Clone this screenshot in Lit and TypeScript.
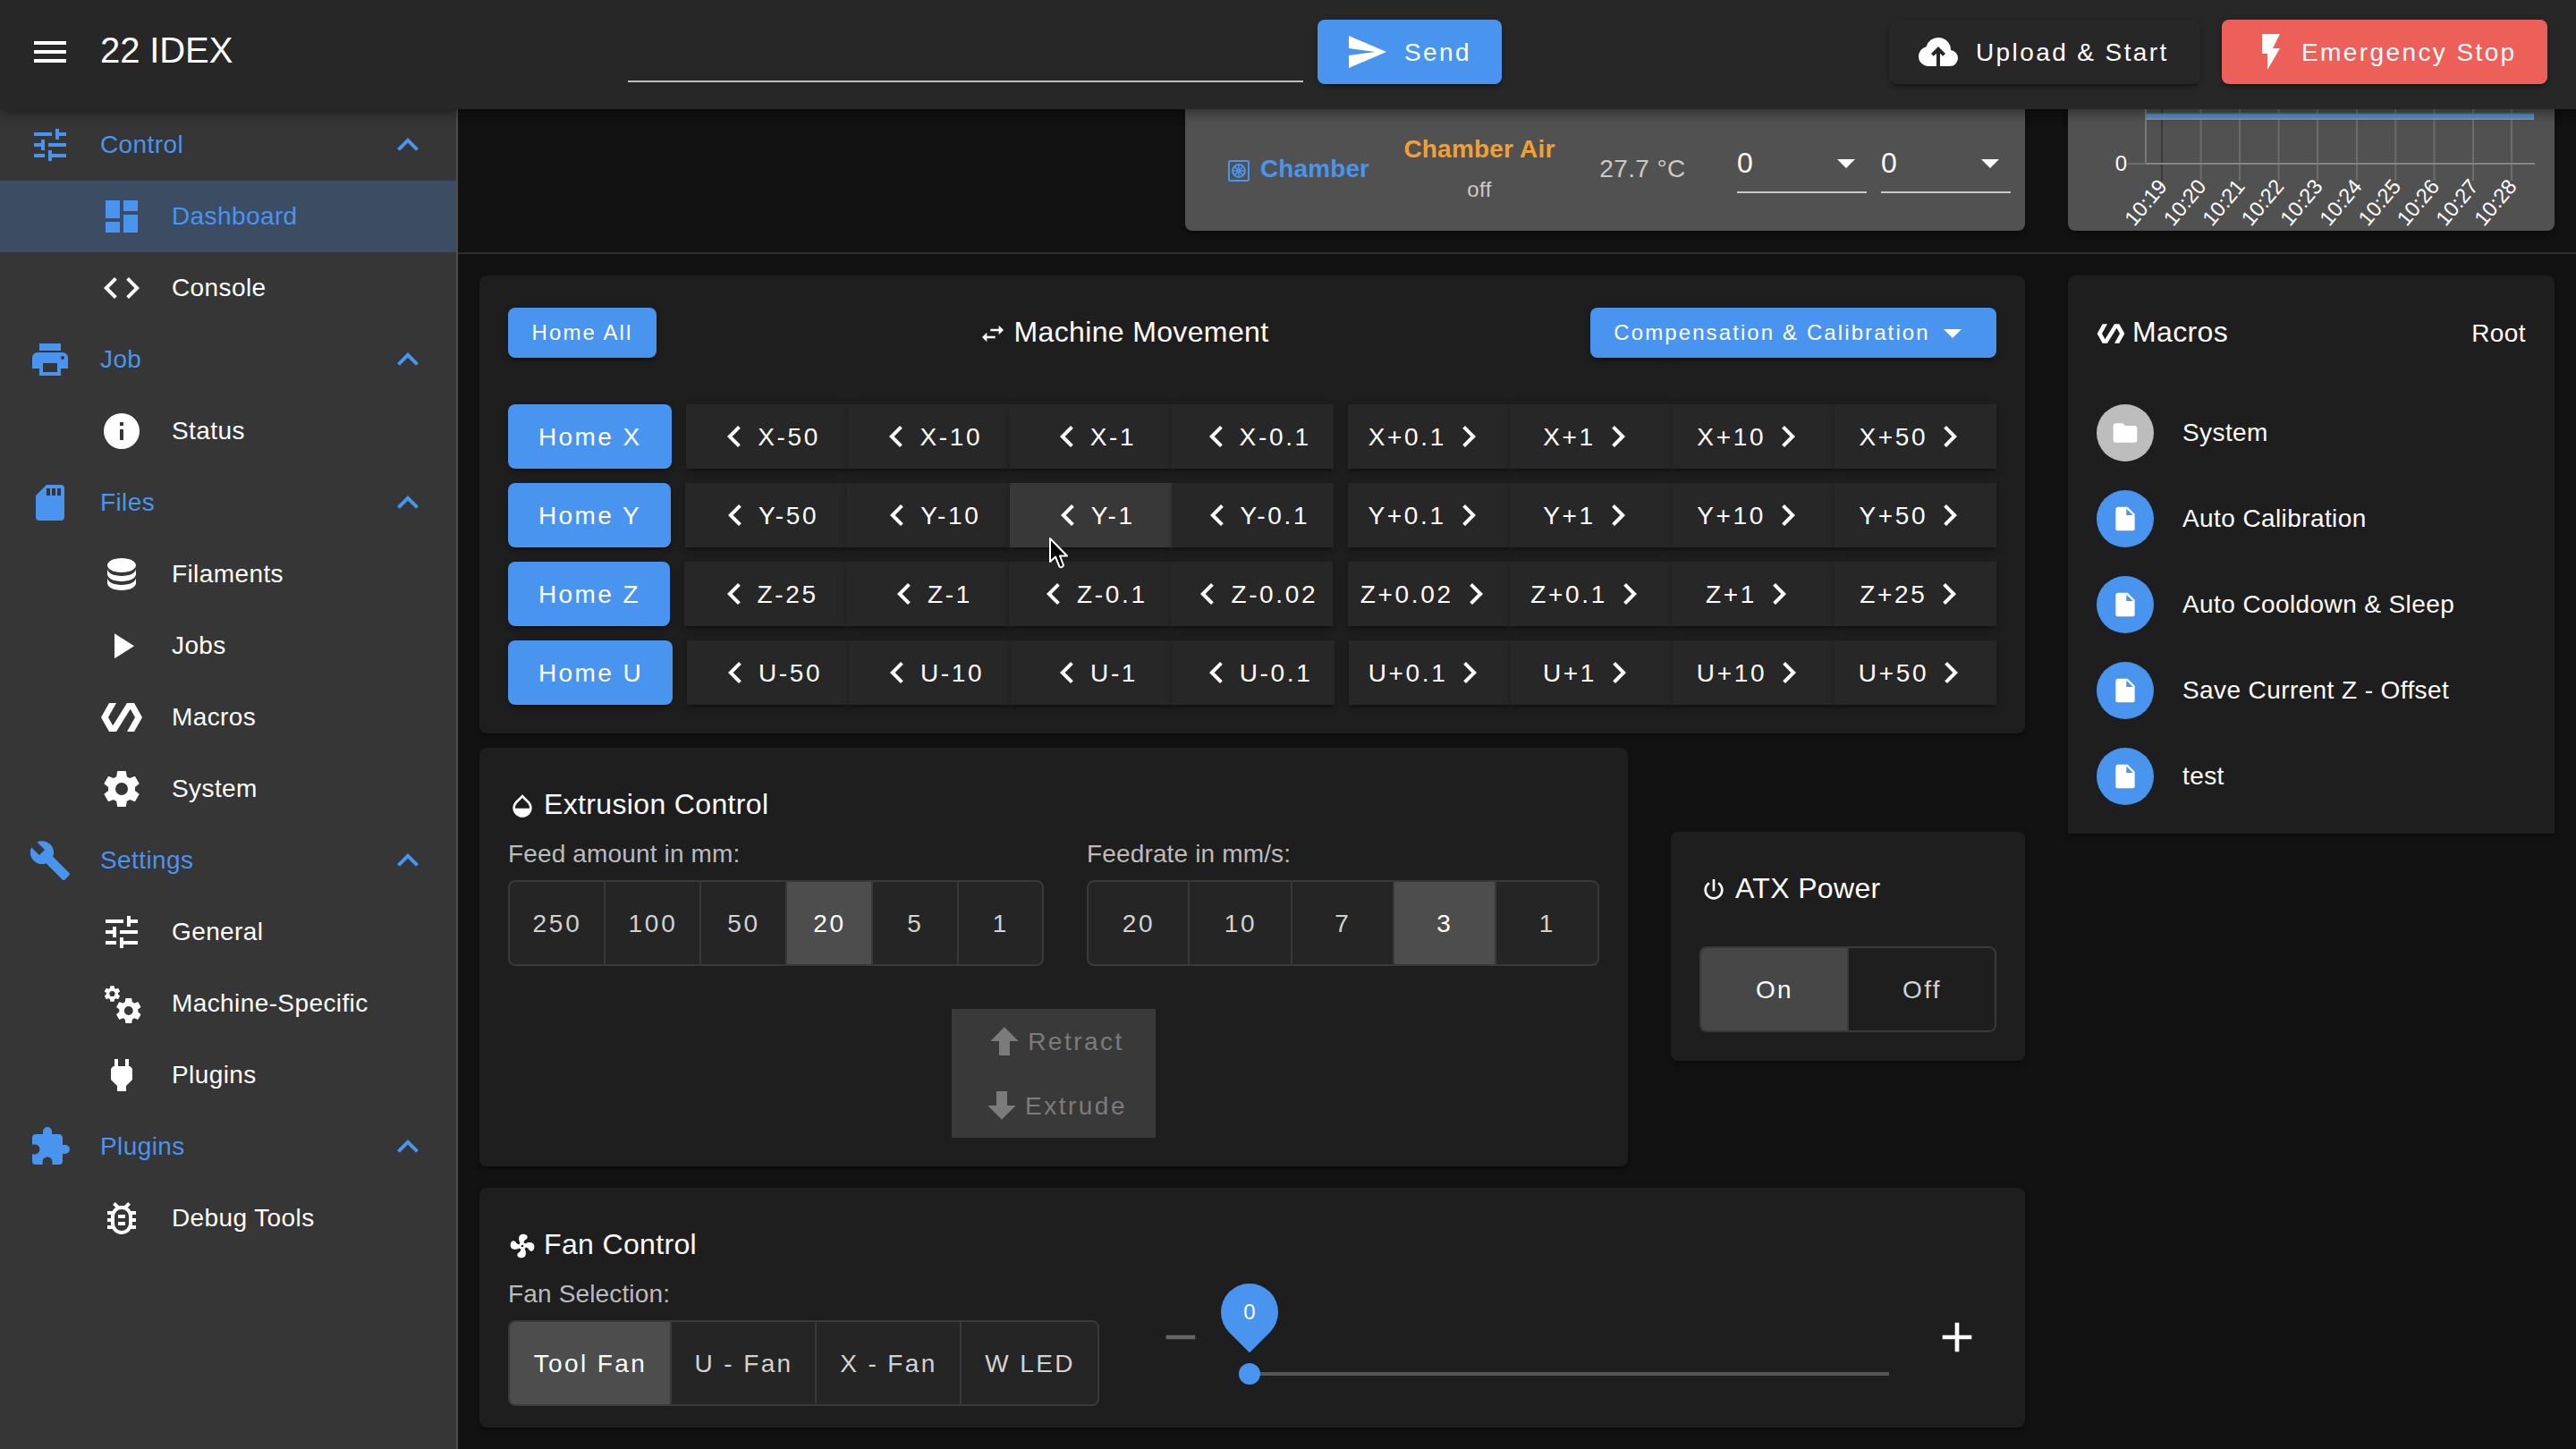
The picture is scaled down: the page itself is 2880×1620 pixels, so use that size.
import { LitElement, html, svg, css } from 'lit';
import { customElement, property } from 'lit/decorators.js';
import { classMap } from 'lit/directives/class-map.js';

const COG =
  'M12,15.5A3.5,3.5 0 0,1 8.5,12A3.5,3.5 0 0,1 12,8.5A3.5,3.5 0 0,1 15.5,12A3.5,3.5 0 0,1 12,15.5M19.43,12.97C19.47,12.65 19.5,12.33 19.5,12C19.5,11.67 19.47,11.34 19.43,11L21.54,9.37C21.73,9.22 21.78,8.95 21.66,8.73L19.66,5.27C19.54,5.05 19.27,4.96 19.05,5.05L16.56,6.05C16.04,5.66 15.5,5.32 14.87,5.07L14.5,2.42C14.46,2.18 14.25,2 14,2H10C9.75,2 9.54,2.18 9.5,2.42L9.13,5.07C8.5,5.32 7.96,5.66 7.44,6.05L4.95,5.05C4.73,4.96 4.46,5.05 4.34,5.27L2.34,8.73C2.21,8.95 2.27,9.22 2.46,9.37L4.57,11C4.53,11.34 4.5,11.67 4.5,12C4.5,12.33 4.53,12.65 4.57,12.97L2.46,14.63C2.27,14.78 2.21,15.05 2.34,15.27L4.34,18.73C4.46,18.95 4.73,19.03 4.95,18.95L7.44,17.94C7.96,18.34 8.5,18.68 9.13,18.93L9.5,21.58C9.54,21.82 9.75,22 10,22H14C14.25,22 14.46,21.82 14.5,21.58L14.87,18.93C15.5,18.67 16.04,18.34 16.56,17.94L19.05,18.95C19.27,19.03 19.54,18.95 19.66,18.73L21.66,15.27C21.78,15.05 21.73,14.78 21.54,14.63L19.43,12.97Z';

// 24x24 icon paths
const ICONS: Record<string, string> = {
  menu: 'M3,6H21V8H3V6M3,11H21V13H3V11M3,16H21V18H3V16Z',
  tune: 'M3,17V19H9V17H3M3,5V7H13V5H3M13,21V19H21V17H13V15H11V21H13M7,9V11H3V13H7V15H9V9H7M21,13V11H11V13H21M15,9H17V7H21V5H17V3H15V9Z',
  dashboard: 'M13,3V9H21V3M13,21H21V11H13M3,21H11V15H3M3,13H11V3H3V13Z',
  code: 'M14.6,16.6L19.2,12L14.6,7.4L16,6L22,12L16,18L14.6,16.6M9.4,16.6L4.8,12L9.4,7.4L8,6L2,12L8,18L9.4,16.6Z',
  printer: 'M18,3H6V7H18M19,12A1,1 0 0,1 18,11A1,1 0 0,1 19,10A1,1 0 0,1 20,11A1,1 0 0,1 19,12M16,19H8V14H16M19,8H5A3,3 0 0,0 2,11V17H6V21H18V17H22V11A3,3 0 0,0 19,8Z',
  info: 'M13,9H11V7H13M13,17H11V11H13M12,2A10,10 0 0,0 2,12A10,10 0 0,0 12,22A10,10 0 0,0 22,12A10,10 0 0,0 12,2Z',
  sd: 'M18,8H16V4H18M15,8H13V4H15M12,8H10V4H12M18,2H10L4,8V20A2,2 0 0,0 6,22H18A2,2 0 0,0 20,20V4A2,2 0 0,0 18,2Z',
  database: 'M12,3C7.58,3 4,4.79 4,7C4,9.21 7.58,11 12,11C16.42,11 20,9.21 20,7C20,4.79 16.42,3 12,3M4,9V12C4,14.21 7.58,16 12,16C16.42,16 20,14.21 20,12V9C20,11.21 16.42,13 12,13C7.58,13 4,11.21 4,9M4,14V17C4,19.21 7.58,21 12,21C16.42,21 20,19.21 20,17V14C20,16.21 16.42,18 12,18C7.58,18 4,16.21 4,14Z',
  play: 'M8,5.14V19.14L19,12.14L8,5.14Z',
  polymer: 'M19,4H15L7.1,16.63L4.5,12L9,4H5L0.5,12L5,20H9L16.89,7.37L19.5,12L15,20H19L23.5,12L19,4Z',
  cog: COG,
  wrench: 'M22.7,19L13.6,9.9C14.5,7.6 14,4.9 12.1,3C10.1,1 7.1,0.6 4.7,1.7L9,6L6,9L1.6,4.7C0.4,7.1 0.9,10.1 2.9,12.1C4.8,14 7.5,14.5 9.8,13.6L18.9,22.7C19.3,23.1 19.9,23.1 20.3,22.7L22.6,20.4C23.1,20 23.1,19.3 22.7,19Z',
  plug: 'M16,7V3H14V7H10V3H8V7H8C7,7 6,8 6,9V14.5L9.5,18V21H14.5V18L18,14.5V9C18,8 17,7 16,7Z',
  puzzle: 'M20.5,11H19V7C19,5.89 18.1,5 17,5H13V3.5A2.5,2.5 0 0,0 10.5,1A2.5,2.5 0 0,0 8,3.5V5H4A2,2 0 0,0 2,7V10.8H3.5C5,10.8 6.2,12 6.2,13.5C6.2,15 5,16.2 3.5,16.2H2V20A2,2 0 0,0 4,22H7.8V20.5C7.8,19 9,17.8 10.5,17.8C12,17.8 13.2,19 13.2,20.5V22H17A2,2 0 0,0 19,20V16H20.5A2.5,2.5 0 0,0 23,13.5A2.5,2.5 0 0,0 20.5,11Z',
  bug: 'M20,8H17.19C16.74,7.2 16.12,6.5 15.37,6L17,4.41L15.59,3L13.42,5.17C12.96,5.06 12.5,5 12,5C11.5,5 11.05,5.06 10.59,5.17L8.41,3L7,4.41L8.62,6C7.87,6.5 7.26,7.21 6.81,8H4V10H6.09C6.03,10.33 6,10.66 6,11V12H4V14H6V15C6,15.34 6.03,15.67 6.09,16H4V18H6.81C8.47,20.87 12.14,21.84 15,20.18C15.91,19.66 16.67,18.9 17.19,18H20V16H17.91C17.97,15.67 18,15.34 18,15V14H20V12H18V11C18,10.66 17.97,10.33 17.91,10H20V8M16,15A4,4 0 0,1 12,19A4,4 0 0,1 8,15V11A4,4 0 0,1 12,7A4,4 0 0,1 16,11V15M14,10V12H10V10H14M10,14H14V16H10V14Z',
  up: 'M7.41,15.41L12,10.83L16.59,15.41L18,14L12,8L6,14L7.41,15.41Z',
  left: 'M15.41,16.58L10.83,12L15.41,7.41L14,6L8,12L14,18L15.41,16.58Z',
  right: 'M8.59,16.58L13.17,12L8.59,7.41L10,6L16,12L10,18L8.59,16.58Z',
  caret: 'M7,10L12,15L17,10H7Z',
  send: 'M2,21L23,12L2,3V10L17,12L2,14V21Z',
  upload: 'M11 20H6.5Q4.22 20 2.61 18.43 1 16.85 1 14.58 1 12.63 2.17 11.1 3.35 9.57 5.25 9.15 5.88 6.85 7.75 5.43 9.63 4 12 4 14.93 4 16.96 6.04 19 8.07 19 11 20.73 11.2 21.86 12.5 23 13.78 23 15.5 23 17.38 21.69 18.69 20.38 20 18.5 20H13V12.85L14.6 14.4 16 13 12 9 8 13 9.4 14.4 11 12.85Z',
  flash: 'M7,2V13H10V22L17,10H13L17,2H7Z',
  swap: 'M21,9L17,5V8H10V10H17V13M7,11L3,15L7,19V16H14V14H7V11Z',
  drop: 'M17.66,8L12,2.35L6.34,8C4.78,9.56 4,11.64 4,13.64C4,15.64 4.78,17.74 6.34,19.3C7.9,20.86 9.95,21.65 12,21.65C14.05,21.65 16.1,20.86 17.66,19.3C19.22,17.74 20,15.64 20,13.64C20,11.64 19.22,9.56 17.66,8M6,14C6,12 6.62,10.73 7.76,9.6L12,5.27L16.24,9.65C17.38,10.77 18,12 18,14H6Z',
  fan: 'M12,11A1,1 0 0,0 11,12A1,1 0 0,0 12,13A1,1 0 0,0 13,12A1,1 0 0,0 12,11M12.5,2C17,2 17.11,5.57 14.75,6.75C13.76,7.24 13.32,8.29 13.13,9.22C13.61,9.42 14.03,9.73 14.35,10.13C18.05,8.13 22.03,8.92 22.03,12.5C22.03,17 18.46,17.1 17.28,14.73C16.78,13.74 15.72,13.3 14.79,13.11C14.59,13.59 14.28,14 13.88,14.34C15.87,18.03 15.08,22 11.5,22C7,22 6.91,18.42 9.27,17.24C10.25,16.75 10.69,15.71 10.89,14.79C10.4,14.59 9.97,14.27 9.65,13.87C5.96,15.85 2,15.07 2,11.5C2,7 5.56,6.89 6.74,9.26C7.24,10.25 8.29,10.68 9.22,10.87C9.41,10.39 9.73,9.97 10.14,9.65C8.15,5.96 8.94,2 12.5,2Z',
  power: 'M16.56,5.44L15.11,6.89C16.84,7.94 18,9.83 18,12A6,6 0 0,1 12,18A6,6 0 0,1 6,12C6,9.83 7.16,7.94 8.88,6.88L7.44,5.44C5.36,6.88 4,9.28 4,12A8,8 0 0,0 12,20A8,8 0 0,0 20,12C20,9.28 18.64,6.88 16.56,5.44M13,3H11V13H13',
  folder: 'M10,4H4C2.89,4 2,4.89 2,6V18A2,2 0 0,0 4,20H20A2,2 0 0,0 22,18V8C22,6.89 21.1,6 20,6H12L10,4Z',
  file: 'M13,9V3.5L18.5,9M6,2C4.89,2 4,2.89 4,4V20A2,2 0 0,0 6,22H18A2,2 0 0,0 20,20V8L14,2H6Z',
  arrowUp: 'M15,20H9V12H4.16L12,4.16L19.84,12H15V20Z',
  arrowDown: 'M9,4H15V12H19.84L12,19.84L4.16,12H9V4Z',
  minus: 'M19,13H5V11H19V13Z',
  plus: 'M19,13H13V19H11V13H5V11H11V5H13V11H19V13Z',
};

@customElement('mdi-icon')
export class MdiIcon extends LitElement {
  @property({ type: String }) name = '';

  static styles = css`
    :host {
      display: block;
      flex: none;
      width: 48px;
      height: 48px;
    }
    svg {
      display: block;
      width: 100%;
      height: 100%;
      fill: currentColor;
    }
    .line {
      fill: none;
      stroke: currentColor;
      stroke-width: 1.5;
    }
    .spokes {
      stroke-width: 1.2;
    }
  `;

  shape() {
    if (this.name === 'cogs') {
      return svg`
        <path transform="translate(7.5 7.6) scale(0.7)" d=${COG}></path>
        <path transform="translate(1.45 1.2) scale(0.44)" d=${COG}></path>`;
    }
    if (this.name === 'chamber') {
      return svg`
        <rect class="line" x="3.75" y="3.75" width="16.5" height="16.5" rx="1"></rect>
        <circle class="line" cx="12" cy="12" r="5.2"></circle>
        <path class="line spokes" d="M12,7V17M7,12H17M8.5,8.5L15.5,15.5M15.5,8.5L8.5,15.5"></path>`;
    }
    return svg`<path d=${ICONS[this.name]}></path>`;
  }

  render() {
    return html`<svg viewBox="0 0 24 24">${this.shape()}</svg>`;
  }
}

const NAV = [
  { icon: 'tune', label: 'Control', items: [['dashboard', 'Dashboard'], ['code', 'Console']] },
  { icon: 'printer', label: 'Job', items: [['info', 'Status']] },
  {
    icon: 'sd',
    label: 'Files',
    items: [['database', 'Filaments'], ['play', 'Jobs'], ['polymer', 'Macros'], ['cog', 'System']],
  },
  {
    icon: 'wrench',
    label: 'Settings',
    items: [['tune', 'General'], ['cogs', 'Machine-Specific'], ['plug', 'Plugins']],
  },
  { icon: 'puzzle', label: 'Plugins', items: [['bug', 'Debug Tools']] },
];

const AXES = [
  { axis: 'X', steps: ['50', '10', '1', '0.1'] },
  { axis: 'Y', steps: ['50', '10', '1', '0.1'] },
  { axis: 'Z', steps: ['25', '1', '0.1', '0.02'] },
  { axis: 'U', steps: ['50', '10', '1', '0.1'] },
];

const MACROS = ['System', 'Auto Calibration', 'Auto Cooldown & Sleep', 'Save Current Z - Offset', 'test'];

const TICKS = [105, 148.6, 192, 235.6, 279, 323, 366.3, 409.5, 453, 496];

@customElement('app-root')
export class AppRoot extends LitElement {
  @property({ type: String }) page = 'Dashboard';
  @property({ type: String }) hovered = 'Y-1';

  static styles = css`
    :host {
      --primary: #4994ee;
      --error: #ed6059;
      --shadow: 0 6px 2px -4px rgba(0, 0, 0, 0.2), 0 4px 4px 0 rgba(0, 0, 0, 0.14), 0 2px 10px 0 rgba(0, 0, 0, 0.12);
      display: flex;
      flex-direction: column;
      position: relative;
      width: 2880px;
      height: 1620px;
      overflow: hidden;
      background: #121212;
      color: #fff;
      font-family: 'Liberation Sans', Arial, sans-serif;
      font-size: 28px;
      letter-spacing: 0.4px;
      white-space: nowrap;
    }
    * {
      box-sizing: border-box;
    }

    /* App bar */
    header {
      display: flex;
      align-items: center;
      flex: none;
      height: 122px;
      padding: 0 32px 6px;
      background: #272727;
      position: relative;
      z-index: 2;
      box-shadow: 0 4px 8px -2px rgba(0, 0, 0, 0.2), 0 8px 10px 0 rgba(0, 0, 0, 0.14), 0 2px 20px 0 rgba(0, 0, 0, 0.12);
    }
    .brand {
      width: 590px;
      margin-left: 32px;
      padding-bottom: 4px;
      font-size: 40px;
      letter-spacing: -0.1px;
    }
    .code {
      width: 755px;
      height: 68px;
      margin-right: 16px;
      border-bottom: 2px solid #bebebe;
    }
    .btn {
      display: flex;
      align-items: center;
      justify-content: center;
      height: 72px;
      padding-top: 2px;
      border-radius: 8px;
      background: #272727;
      box-shadow: var(--shadow);
      letter-spacing: 2.4px;
    }
    .btn mdi-icon {
      margin-top: -2px;
    }
    .btn.primary {
      background: var(--primary);
    }
    .btn.error {
      background: var(--error);
    }
    .btn.small {
      height: 56px;
      padding-top: 0;
      font-size: 24px;
      letter-spacing: 2.1px;
    }
    .btn.small mdi-icon {
      margin: 0 -1px 0 1px;
    }
    header .btn {
      justify-content: flex-start;
      padding-left: 31px;
    }
    header .btn mdi-icon {
      margin-right: 18px;
    }
    .send {
      width: 206px;
    }
    header .start {
      width: 347px;
      margin-left: auto;
      padding-left: 30px;
    }
    .stop {
      width: 364px;
      margin-left: 24px;
    }
    header .stop mdi-icon {
      margin-right: 10px;
    }

    .body {
      display: flex;
      flex: 1;
      min-height: 0;
    }

    /* Navigation drawer */
    nav {
      width: 512px;
      flex: none;
      background: #363636;
      border-right: 2px solid #4e4e4e;
    }
    .row {
      display: flex;
      align-items: center;
      height: 80px;
      padding: 0 30px 0 32px;
    }
    .row span {
      flex: 1;
      margin-left: 32px;
      padding-bottom: 1px;
    }
    .row.group {
      color: var(--primary);
    }
    .row.item {
      padding-left: 112px;
    }
    .row.active {
      color: var(--primary);
      background: #3c4d63;
    }

    /* Content */
    main {
      flex: 1;
      min-width: 0;
    }
    .card {
      background: #1e1e1e;
      border-radius: 8px;
      box-shadow: var(--shadow);
      padding: 32px;
    }
    .status {
      display: flex;
      justify-content: flex-end;
      gap: 48px;
      height: 162px;
      padding: 0 24px 24px 0;
      border-bottom: 2px solid #2e2e2e;
    }
    .status .card {
      background: #515151;
      border-radius: 0 0 8px 8px;
      padding: 0;
    }
    .tools {
      display: grid;
      grid-template-columns: 232px 194px 191px 145px 145px;
      width: 939px;
      height: 136px;
    }
    .tool {
      display: flex;
      align-items: center;
      height: 134px;
      padding-left: 44px;
      color: var(--primary);
      font-weight: bold;
      letter-spacing: 0.1px;
    }
    .tool mdi-icon {
      width: 32px;
      height: 32px;
      margin: 4px 8px 0 0;
    }
    .heater {
      display: flex;
      flex-direction: column;
      align-items: center;
      padding-top: 29px;
      line-height: 32px;
      color: #cacaca;
    }
    .heater b {
      color: #f2a035;
      letter-spacing: 0.2px;
    }
    .heater small {
      margin-top: 15px;
      font-size: 24px;
      line-height: 28px;
    }
    .temp {
      height: 134px;
      line-height: 134px;
      padding-right: 20px;
      text-align: center;
      color: #cacaca;
    }
    .select {
      display: flex;
      align-items: center;
      justify-content: space-between;
      width: 145px;
      height: 68px;
      margin-top: 26px;
      border-bottom: 2px solid #cacaca;
      font-size: 32px;
      letter-spacing: 0;
    }
    .select span {
      padding-top: 3px;
    }
    .select mdi-icon {
      margin: 1px -1px 0 0;
    }
    .select + .select {
      margin-left: 16px;
    }
    .chart {
      width: 544px;
      height: 136px;
    }
    .chart svg {
      display: block;
      overflow: visible;
    }
    .chart text {
      fill: #fff;
      font-size: 24px;
      letter-spacing: 0;
      text-anchor: end;
    }
    .chart .tick {
      font-size: 23.5px;
    }

    .panels {
      display: grid;
      grid-template-columns: 1728px 544px;
      gap: 48px;
      padding: 24px;
      align-items: start;
    }
    h2 {
      display: flex;
      align-items: center;
      gap: 8px;
      height: 62px;
      margin: 0;
      font-size: 32px;
      font-weight: normal;
      letter-spacing: 0.35px;
    }
    h2 mdi-icon {
      width: 32px;
      height: 32px;
      margin-top: 3px;
    }

    .movement {
      height: 512px;
      padding-top: 36px;
    }
    .movement-head {
      display: flex;
      align-items: center;
      justify-content: space-between;
      height: 56px;
      margin-bottom: 52px;
    }
    .movement-head h2 {
      padding-bottom: 2px;
    }
    .home-all {
      width: 166px;
    }
    .calibration {
      width: 454px;
    }
    .axis {
      display: flex;
      gap: 16px;
      margin-bottom: 16px;
    }
    .axis > .btn {
      padding: 2px 33px 0 34px;
    }
    .steps {
      display: flex;
      flex: 1 1 0;
      min-width: 0;
    }
    .steps .btn {
      flex: 1 1 0;
      min-width: 0;
      border-radius: 0;
      gap: 2px;
      letter-spacing: 2.65px;
    }
    .steps.inc .btn {
      gap: 1px;
    }
    .steps .btn.hover {
      background: #383838;
    }

    .middle {
      display: flex;
      gap: 48px;
      margin: 16px 0 24px;
    }
    .extrusion {
      width: 1284px;
      height: 468px;
    }
    .atx {
      width: 396px;
      height: 256px;
      margin-top: 94px;
    }
    .atx .toggle {
      margin-top: 34px;
      background: #1e1e1e;
    }
    .feeds {
      display: flex;
      gap: 48px;
    }
    .label {
      height: 54px;
      line-height: 49px;
      color: #bbb;
      letter-spacing: 0.15px;
    }
    .toggle {
      display: grid;
      height: 96px;
      border: 2px solid #393939;
      border-radius: 8px;
      background: #252525;
      overflow: hidden;
      color: #d2d2d2;
      letter-spacing: 2.8px;
    }
    .toggle div {
      display: flex;
      align-items: center;
      justify-content: center;
      padding: 2px 0 0 1px;
      border-left: 2px solid #393939;
    }
    .toggle div:first-child {
      border-left: 0;
    }
    .toggle div.on {
      background: #4d4d4d;
      color: #fff;
    }
    .atx .toggle div.on {
      background: #474747;
    }
    .amount {
      width: 599px;
      grid-template-columns: 105px 107px 96px 96px 96px 1fr;
    }
    .rate {
      width: 573px;
      grid-template-columns: 111px 115px 114px 114px 1fr;
    }
    .onoff {
      width: 332px;
      grid-template-columns: 163px 1fr;
      letter-spacing: 2.4px;
    }
    .fans {
      width: 661px;
      grid-template-columns: 179px 162px 162px 1fr;
      letter-spacing: 2.4px;
    }
    .extrude {
      width: 228px;
      margin: 48px auto 0;
      background: #393939;
      color: #7b7b7b;
      letter-spacing: 2.5px;
    }
    .extrude div {
      display: flex;
      align-items: center;
      justify-content: center;
      gap: 2px;
      height: 72px;
      padding-top: 2px;
    }
    .extrude mdi-icon {
      margin-top: -2px;
    }

    .fan {
      display: flex;
      height: 268px;
      padding-bottom: 24px;
    }
    .slider {
      display: flex;
      flex: 1;
      margin: 107px 0 0 63px;
    }
    .slider mdi-icon {
      width: 56px;
      height: 56px;
    }
    .slider .minus {
      color: #666;
    }
    .track {
      position: relative;
      width: 715px;
      height: 4px;
      margin: 67px 48px 0 49px;
      background: #555;
    }
    .thumb {
      position: absolute;
      left: -12px;
      top: -10px;
      width: 24px;
      height: 24px;
      border-radius: 50%;
      background: var(--primary);
    }
    .bubble {
      position: absolute;
      left: -32px;
      top: -99px;
      width: 64px;
      height: 64px;
      border-radius: 50% 50% 0;
      transform: rotate(45deg);
      background: var(--primary);
    }
    .bubble span {
      display: block;
      transform: rotate(-45deg);
      font-size: 24px;
      line-height: 64px;
      text-align: center;
      letter-spacing: 0;
    }

    .macros {
      height: 624px;
      border-radius: 8px 8px 0 0;
    }
    .macros-head {
      display: flex;
      align-items: center;
      justify-content: space-between;
      margin-bottom: 34px;
    }
    .macros-head span {
      padding-top: 3px;
    }
    .macro {
      display: flex;
      align-items: center;
      gap: 32px;
      height: 96px;
    }
    .avatar {
      display: flex;
      align-items: center;
      justify-content: center;
      width: 64px;
      height: 64px;
      border-radius: 50%;
      background: var(--primary);
    }
    .avatar.grey {
      background: #bdbdbd;
    }
    .avatar mdi-icon {
      width: 32px;
      height: 32px;
    }

    .pointer {
      position: absolute;
      left: 1171px;
      top: 599px;
      z-index: 3;
    }
  `;

  renderHeader() {
    return html`
      <header>
        <mdi-icon name="menu"></mdi-icon>
        <div class="brand">22 IDEX</div>
        <div class="code"></div>
        <div class="btn primary send"><mdi-icon name="send"></mdi-icon>Send</div>
        <div class="btn start"><mdi-icon name="upload"></mdi-icon>Upload &amp; Start</div>
        <div class="btn error stop"><mdi-icon name="flash"></mdi-icon>Emergency Stop</div>
      </header>
    `;
  }

  renderNav() {
    return html`
      <nav>
        ${NAV.map(
          (group) => html`
            <div class="row group">
              <mdi-icon name=${group.icon}></mdi-icon>
              <span>${group.label}</span>
              <mdi-icon name="up"></mdi-icon>
            </div>
            ${group.items.map(
              ([icon, label]) => html`
                <div class=${classMap({ row: true, item: true, active: label === this.page })}>
                  <mdi-icon name=${icon}></mdi-icon>
                  <span>${label}</span>
                </div>
              `
            )}
          `
        )}
      </nav>
    `;
  }

  renderChart() {
    return html`
      <svg width="544" height="136" viewBox="0 0 544 136">
        <path d="M87,0V60" stroke="#797979" stroke-width="2"></path>
        ${TICKS.map(
          (x, i) => svg`
            <path d="M${x},0V80" stroke=${i === 0 ? '#3a3a3a' : '#6c6c6c'} stroke-width="2"></path>
            <text class="tick" transform="translate(${x + 7} 87) rotate(-50)">10:${19 + i}</text>`
        )}
        <path d="M67,61H88" stroke="#6c6c6c" stroke-width="2"></path>
        <path d="M87,61H522" stroke="#858585" stroke-width="2"></path>
        <path d="M87,5.5H521" stroke="#5f8a5c" stroke-width="2"></path>
        <path d="M87,11H521" stroke="#b98d4c" stroke-width="2"></path>
        <path d="M87,8.2H521" stroke="#4a90e2" stroke-width="4.4"></path>
        <text x="66" y="69">0</text>
      </svg>
    `;
  }

  renderStatus() {
    return html`
      <section class="status">
        <div class="card tools">
          <div class="tool"><mdi-icon name="chamber"></mdi-icon>Chamber</div>
          <div class="heater"><b>Chamber Air</b><small>off</small></div>
          <div class="temp">27.7 °C</div>
          <div class="select"><span>0</span><mdi-icon name="caret"></mdi-icon></div>
          <div class="select"><span>0</span><mdi-icon name="caret"></mdi-icon></div>
        </div>
        <div class="card chart">${this.renderChart()}</div>
      </section>
    `;
  }

  renderStep(label: string, inc: boolean) {
    return html`
      <div class=${classMap({ btn: true, hover: label === this.hovered })}>
        ${inc
          ? html`${label}<mdi-icon name="right"></mdi-icon>`
          : html`<mdi-icon name="left"></mdi-icon>${label}`}
      </div>
    `;
  }

  renderMovement() {
    return html`
      <div class="card movement">
        <div class="movement-head">
          <div class="btn primary small home-all">Home All</div>
          <h2><mdi-icon name="swap"></mdi-icon>Machine Movement</h2>
          <div class="btn primary small calibration">
            Compensation &amp; Calibration<mdi-icon name="caret"></mdi-icon>
          </div>
        </div>
        ${AXES.map(
          ({ axis, steps }) => html`
            <div class="axis">
              <div class="btn primary">Home ${axis}</div>
              <div class="steps">${steps.map((step) => this.renderStep(`${axis}-${step}`, false))}</div>
              <div class="steps inc">
                ${[...steps].reverse().map((step) => this.renderStep(`${axis}+${step}`, true))}
              </div>
            </div>
          `
        )}
      </div>
    `;
  }

  renderToggle(kind: string, options: string[], active: string) {
    return html`
      <div class="toggle ${kind}">
        ${options.map((option) => html`<div class=${classMap({ on: option === active })}>${option}</div>`)}
      </div>
    `;
  }

  renderExtrusion() {
    return html`
      <div class="card extrusion">
        <h2><mdi-icon name="drop"></mdi-icon>Extrusion Control</h2>
        <div class="feeds">
          <div>
            <div class="label">Feed amount in mm:</div>
            ${this.renderToggle('amount', ['250', '100', '50', '20', '5', '1'], '20')}
          </div>
          <div>
            <div class="label">Feedrate in mm/s:</div>
            ${this.renderToggle('rate', ['20', '10', '7', '3', '1'], '3')}
          </div>
        </div>
        <div class="extrude">
          <div><mdi-icon name="arrowUp"></mdi-icon>Retract</div>
          <div><mdi-icon name="arrowDown"></mdi-icon>Extrude</div>
        </div>
      </div>
    `;
  }

  renderFan() {
    return html`
      <div class="card fan">
        <div>
          <h2><mdi-icon name="fan"></mdi-icon>Fan Control</h2>
          <div class="label">Fan Selection:</div>
          ${this.renderToggle('fans', ['Tool Fan', 'U - Fan', 'X - Fan', 'W LED'], 'Tool Fan')}
        </div>
        <div class="slider">
          <mdi-icon class="minus" name="minus"></mdi-icon>
          <div class="track">
            <div class="thumb"></div>
            <div class="bubble"><span>0</span></div>
          </div>
          <mdi-icon name="plus"></mdi-icon>
        </div>
      </div>
    `;
  }

  renderMacros() {
    return html`
      <div class="card macros">
        <div class="macros-head">
          <h2><mdi-icon name="polymer"></mdi-icon>Macros</h2>
          <span>Root</span>
        </div>
        ${MACROS.map(
          (name, i) => html`
            <div class="macro">
              <div class=${classMap({ avatar: true, grey: i === 0 })}>
                <mdi-icon name=${i === 0 ? 'folder' : 'file'}></mdi-icon>
              </div>
              <span>${name}</span>
            </div>
          `
        )}
      </div>
    `;
  }

  render() {
    return html`
      ${this.renderHeader()}
      <div class="body">
        ${this.renderNav()}
        <main>
          ${this.renderStatus()}
          <section class="panels">
            <div>
              ${this.renderMovement()}
              <div class="middle">
                ${this.renderExtrusion()}
                <div class="card atx">
                  <h2><mdi-icon name="power"></mdi-icon>ATX Power</h2>
                  ${this.renderToggle('onoff', ['On', 'Off'], 'On')}
                </div>
              </div>
              ${this.renderFan()}
            </div>
            ${this.renderMacros()}
          </section>
        </main>
      </div>
      <svg class="pointer" width="26" height="40" viewBox="0 0 26 40">
        <path
          d="M3,3V29L9,23.5L13.5,34.5Q16,36.5 18,33L14,22.5H22Z"
          fill="#000"
          stroke="#fff"
          stroke-width="2"
          stroke-linejoin="round"
        ></path>
      </svg>
    `;
  }
}
